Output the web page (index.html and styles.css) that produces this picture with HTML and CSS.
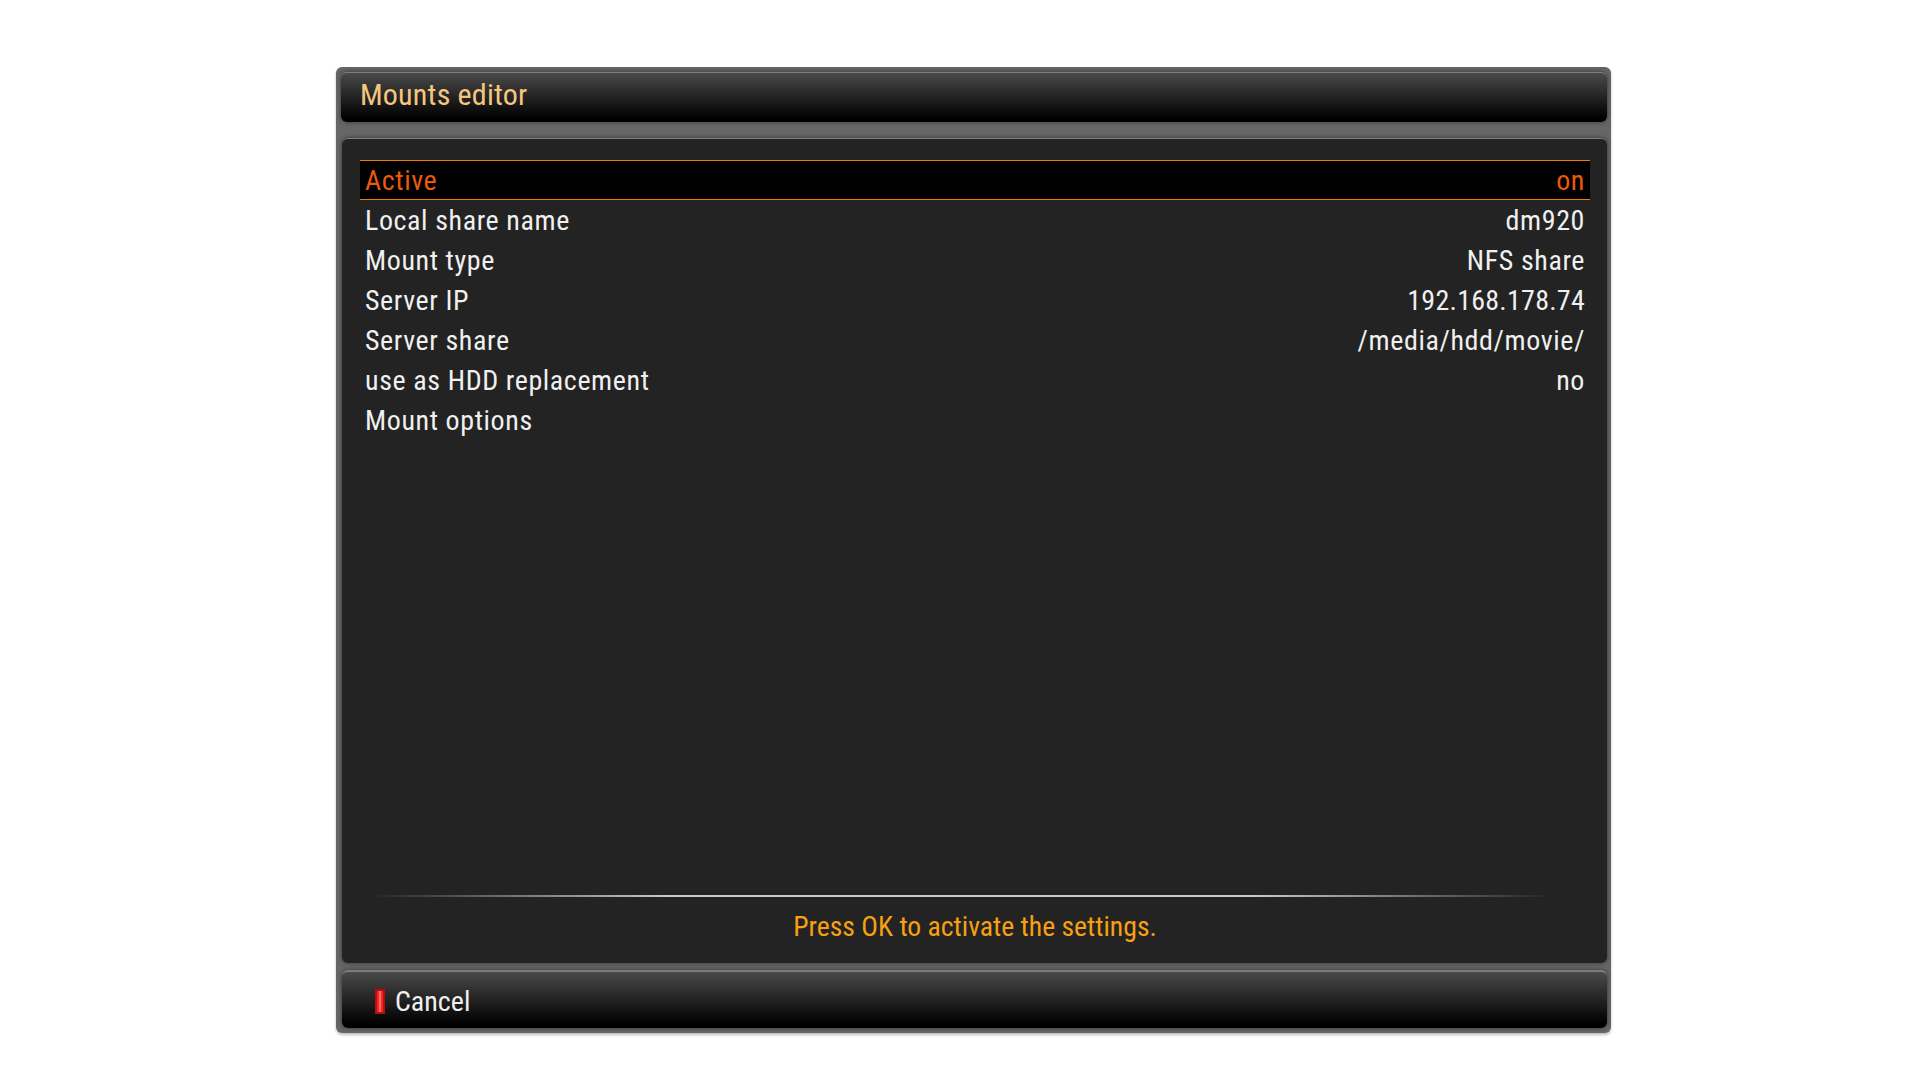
FILE: index.html
```html
<!DOCTYPE html>
<html lang="en">
<head>
    <meta charset="UTF-8">
    <meta name="viewport" content="width=device-width, initial-scale=1.0">
    <title>Mounts editor</title>
    <link rel="stylesheet" href="styles.css">
</head>
<body>
    <div class="window">
        <div class="title-bar">Mounts editor</div>
        <div class="panel">
            <div class="list">
                <div class="row selected"><span class="text">Active</span><span class="text">on</span></div>
                <div class="row"><span class="text">Local share name</span><span class="text">dm920</span></div>
                <div class="row"><span class="text">Mount type</span><span class="text">NFS share</span></div>
                <div class="row"><span class="text">Server IP</span><span class="text number">192.168.178.74</span></div>
                <div class="row"><span class="text">Server share</span><span class="text">/media/hdd/movie/</span></div>
                <div class="row"><span class="text">use as HDD replacement</span><span class="text">no</span></div>
                <div class="row"><span class="text">Mount options</span></div>
            </div>
            <div class="divider"></div>
            <div class="hint">Press OK to activate the settings.</div>
        </div>
        <div class="footer">
            <span class="key-red"></span>
            <span class="key-label">Cancel</span>
        </div>
    </div>
</body>
</html>
```

FILE: styles.css
```css
body {
    margin: 0;
    height: 1080px;
    overflow: hidden;
    background-color: #fff;
    font-family: Roboto, sans-serif;
    font-stretch: 75%;
    font-weight: 370;
    color: #f0f0f0;
}
.window {
    box-sizing: border-box;
    width: 1275px;
    height: 966px;
    margin: 67px 0 0 336px;
    padding: 5px 4px 5px 6px;
    display: flex;
    flex-direction: column;
    background-color: #666;
    border-radius: 6px;
    box-shadow: 0 2px 3px rgba(0, 0, 0, 0.25);
}
.title-bar {
    box-sizing: border-box;
    height: 50px;
    margin-left: -1px;
    padding-left: 19px;
    line-height: 44px;
    font-size: 30px;
    letter-spacing: 0.2px;
    color: #f5c67f;
    border-top: 1px solid #7d7d7d;
    border-radius: 6px;
    background: linear-gradient(#4a4a4a, #000 93%);
    box-shadow: 0 0 4px rgba(0, 0, 0, 0.5);
}
.panel {
    box-sizing: border-box;
    height: 825px;
    margin-top: 16px;
    padding: 21px 17px 0 18px;
    display: flex;
    flex-direction: column;
    background-color: #232323;
    border-top: 1px solid #7d7d7d;
    border-radius: 6px;
    box-shadow: 0 0 4px rgba(0, 0, 0, 0.5);
}
.list {
    height: 735px;
}
.row {
    display: flex;
    justify-content: space-between;
    align-items: center;
    box-sizing: border-box;
    height: 40px;
    padding: 0 5px;
    font-size: 28px;
    letter-spacing: 0.6px;
}
.row .number {
    letter-spacing: 0.25px;
}
.row.selected {
    color: #e85a0c;
    background-color: #000;
    border-top: 1px solid #ef7a00;
    border-bottom: 1px solid #ef7a00;
}
.divider {
    height: 2px;
    margin: 0 37px 0 10px;
    background: linear-gradient(to right, transparent, #c8c8c8 25%, #c8c8c8 75%, transparent);
}
.hint {
    margin-top: 13px;
    text-align: center;
    font-size: 27.7px;
    color: #f7a011;
}
.footer {
    box-sizing: border-box;
    height: 58px;
    margin-top: 7px;
    padding: 2px 0 0 33px;
    display: flex;
    align-items: center;
    border-top: 2px solid #7d7d7d;
    border-radius: 6px;
    background: linear-gradient(#4a4a4a, #000 93%);
    box-shadow: 0 0 4px rgba(0, 0, 0, 0.5);
}
.key-red {
    box-sizing: border-box;
    width: 10px;
    height: 25px;
    margin-right: 10px;
    background: linear-gradient(to right, #f22 25%, #f77 45%, #f77 55%, #f22 75%);
    border: 2px solid #b01010;
}
.key-label {
    font-size: 28px;
}
```
